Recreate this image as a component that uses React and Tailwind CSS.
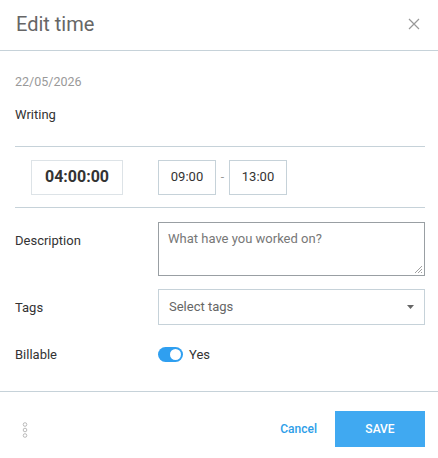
export default function App() {
  const font = { fontFamily: 'Roboto, "Liberation Sans", sans-serif' };
  return (
    <div className="w-[438px] h-[458px] bg-white text-[#333]" style={font}>
      {/* Header */}
      <div className="h-[51px] flex items-center justify-between pl-[16px] pr-[18px] border-b border-[#c6d2d9]">
        <div className="text-[20px] text-[#666] leading-none -mt-[2px]">Edit time</div>
        <svg width="12" height="12" viewBox="0 0 12 12" className="-mt-[2px]">
          <path d="M1 1L11 11M11 1L1 11" stroke="#999" strokeWidth="1.2" fill="none" />
        </svg>
      </div>

      <div className="px-[15px] pr-[13px]">
        <div className="pt-[24px] text-[12.5px] text-[#999] leading-[14px]">22/05/2026</div>
        <div className="pt-[18px] text-[13px] text-[#333] leading-[15px]">Writing</div>

        <div className="mt-[24px] border-t border-[#c6d2d9] h-[62px] flex items-center border-b">
          <div className="ml-[16px] w-[92px] h-[35px] border border-[#dde3e7] flex items-center justify-center text-[16px] font-bold text-[#333]">
            04:00:00
          </div>
          <div className="ml-[35px] w-[58px] h-[35px] border border-[#c6d2d9] flex items-center justify-center text-[13px] text-[#333]">
            09:00
          </div>
          <div className="w-[13px] text-center text-[12px] text-[#999]">-</div>
          <div className="w-[58px] h-[35px] border border-[#c6d2d9] flex items-center justify-center text-[13px] text-[#333]">
            13:00
          </div>
        </div>

        <div className="mt-[14px] flex">
          <div className="w-[143px] pt-[11px] text-[13px] text-[#333] leading-[15px]">Description</div>
          <div className="relative w-[267px] h-[54px] border border-[#999fa3] px-[9px] pt-[8px] text-[13px] text-[#777] leading-[15px]">
            What have you worked on?
            <svg width="10" height="10" viewBox="0 0 10 10" className="absolute right-[1px] bottom-[1px]">
              <path d="M9 2L2 9M9 5L5 9M9 8L8 9" stroke="#888" strokeWidth="0.8" />
            </svg>
          </div>
        </div>

        <div className="mt-[13px] flex items-center">
          <div className="w-[143px] text-[13px] text-[#333] leading-[15px]">Tags</div>
          <div className="w-[267px] h-[36px] border border-[#c6d2d9] flex items-center justify-between pl-[10px] pr-[10px] text-[13px] text-[#666]">
            <span>Select tags</span>
            <svg width="7" height="4" viewBox="0 0 7 4">
              <path d="M0 0H7L3.5 4Z" fill="#666" />
            </svg>
          </div>
        </div>

        <div className="mt-[20px] flex items-center">
          <div className="w-[143px] text-[13px] text-[#333] leading-[15px]">Billable</div>
          <div className="flex items-center">
            <div className="w-[25px] h-[15px] rounded-full bg-[#2f9ff0] relative">
              <div className="absolute right-[2px] top-[2px] w-[11px] h-[11px] rounded-full bg-white"></div>
            </div>
            <span className="ml-[6px] text-[13px] text-[#333]">Yes</span>
          </div>
        </div>
      </div>

      {/* Footer */}
      <div className="mt-[26px] border-t border-[#c6d2d9] h-[68px] flex items-start justify-between pl-[22px] pr-[13px] pt-[19px]">
        <svg width="6" height="16" viewBox="0 0 6 16" className="mt-[11px]">
          <circle cx="3" cy="2.5" r="1.8" fill="none" stroke="#aaa" strokeWidth="0.8" />
          <circle cx="3" cy="8" r="1.8" fill="none" stroke="#aaa" strokeWidth="0.8" />
          <circle cx="3" cy="13.5" r="1.8" fill="none" stroke="#aaa" strokeWidth="0.8" />
        </svg>
        <div className="flex items-center">
          <button className="text-[12px] font-medium text-[#2d9ee8] mr-[18px]">Cancel</button>
          <button className="w-[90px] h-[36px] bg-[#40a9f1] text-white text-[12px] font-medium">SAVE</button>
        </div>
      </div>
    </div>
  );
}
